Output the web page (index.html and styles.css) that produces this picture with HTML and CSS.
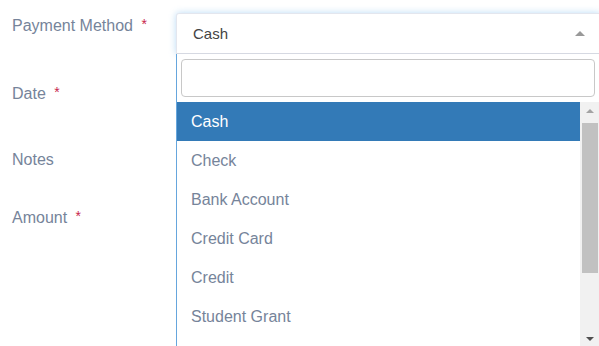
FILE: index.html
```html
<!DOCTYPE html>
<html lang="en">
<head>
  <meta charset="UTF-8" />
  <title>Payment</title>
  <link rel="stylesheet" href="styles.css">
</head>
<body>
<form class="payment-form">
  <div class="form-row row-method">
    <label class="form-label">Payment Method <span class="req">*</span></label>
  </div>
  <div class="form-row row-date">
    <label class="form-label">Date <span class="req">*</span></label>
  </div>
  <div class="form-row row-notes">
    <label class="form-label">Notes</label>
  </div>
  <div class="form-row row-amount">
    <label class="form-label">Amount <span class="req">*</span></label>
  </div>

  <div class="select-wrap">
    <div class="select-box">
      <span class="select-value">Cash</span>
      <span class="select-arrow"></span>
    </div>
    <div class="select-dropdown">
      <div class="search-wrap">
        <input class="search-input" type="text" />
      </div>
      <div class="option-area">
        <ul class="option-list">
          <li class="option active">Cash</li>
          <li class="option">Check</li>
          <li class="option">Bank Account</li>
          <li class="option">Credit Card</li>
          <li class="option">Credit</li>
          <li class="option">Student Grant</li>
        </ul>
        <div class="scrollbar">
          <span class="scroll-btn up"></span>
          <span class="scroll-thumb"></span>
          <span class="scroll-space"></span>
          <span class="scroll-btn down"></span>
        </div>
      </div>
    </div>
  </div>
</form>
</body>
</html>
```

FILE: styles.css
```css
body {
  font-family: 'Liberation Sans', Arial, sans-serif;
  background: #fff;
  margin: 0;
  overflow: hidden;
  height: 346px;
}
.payment-form {
  position: relative;
  padding: 15px 12px 0 12px;
}
.form-row {
  display: flex;
}
.row-date { margin-top: 48px; }
.row-notes { margin-top: 47px; }
.row-amount { margin-top: 38px; }
.form-label {
  font-size: 16px;
  line-height: 19px;
  color: #76849a;
}
.req {
  color: #c7254e;
  font-size: 14px;
  margin-left: 4px;
  vertical-align: 2px;
}
.select-wrap {
  position: absolute;
  left: 176px;
  top: 13px;
  width: 424px;
}
.select-box {
  display: flex;
  align-items: center;
  height: 39px;
  border: 1px solid #e3e6ee;
  border-bottom-color: #d6d9e2;
  border-radius: 3px 0 0 0;
  padding: 0 14px 0 16px;
  box-shadow: 0 0 7px rgba(102, 175, 233, 0.45);
  background: #fff;
}
.select-value {
  flex: 1;
  font-size: 15px;
  color: #444;
}
.select-arrow {
  width: 0;
  height: 0;
  border-left: 5px solid transparent;
  border-right: 5px solid transparent;
  border-bottom: 5px solid #999;
}
.select-dropdown {
  border-left: 1px solid #66a6dd;
  background: #fff;
  height: 293px;
  display: flex;
  flex-direction: column;
}
.search-wrap {
  padding: 5px 5px 5px 4px;
}
.search-input {
  display: block;
  width: 100%;
  box-sizing: border-box;
  height: 38px;
  border: 1px solid #c8c8c8;
  border-radius: 4px;
  outline: none;
}
.option-area {
  flex: 1;
  display: flex;
  min-height: 0;
}
.option-list {
  flex: 1;
  list-style: none;
  margin: 0;
  padding: 0;
  overflow: hidden;
}
.option {
  height: 39px;
  line-height: 39px;
  padding-left: 14px;
  font-size: 16px;
  color: #76849a;
}
.option.active {
  background: #337ab7;
  color: #fff;
}
.scrollbar {
  width: 20px;
  background: #f1f1f1;
  display: flex;
  flex-direction: column;
  align-items: center;
}
.scroll-btn {
  height: 17px;
  display: flex;
  align-items: center;
  justify-content: center;
}
.scroll-btn::before {
  content: '';
  border-left: 4px solid transparent;
  border-right: 4px solid transparent;
}
.scroll-btn.up::before {
  border-bottom: 4px solid #a3a3a3;
}
.scroll-btn.down::before {
  border-top: 4px solid #505050;
}
.scroll-thumb {
  width: 16px;
  height: 150px;
  margin-top: 4px;
  background: #c1c1c1;
}
.scroll-space {
  flex: 1;
}
```
